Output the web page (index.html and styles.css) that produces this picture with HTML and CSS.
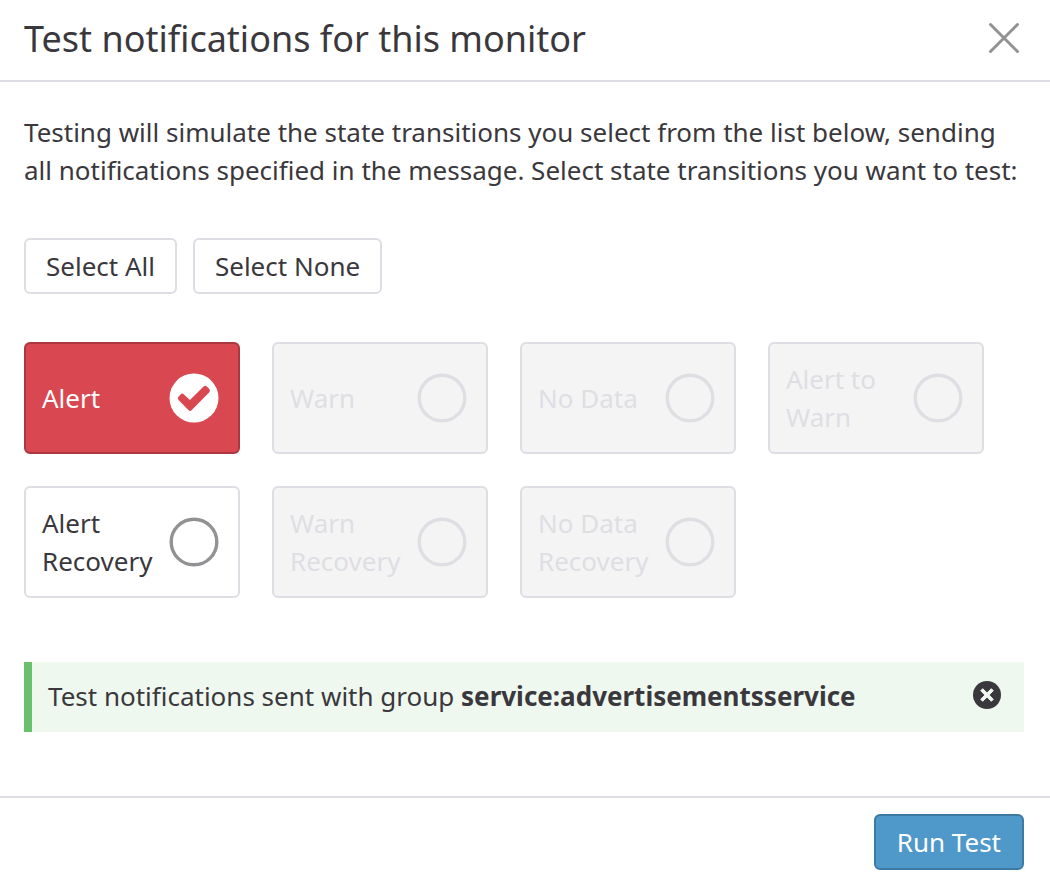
FILE: index.html
```
<!DOCTYPE html>
<html lang="en">
<head>
<meta charset="utf-8">
<meta name="viewport" content="width=device-width, initial-scale=1">
<title>Test notifications for this monitor</title>
<link rel="stylesheet" href="styles.css">
</head>
<body>
<main class="modal">
  <header class="modal-header">
    <h1 class="modal-title">Test notifications for this monitor</h1>
    <button class="icon-button" type="button" aria-label="Close">
      <svg class="close-icon" viewBox="0 0 32 32" aria-hidden="true"><path d="M2.5 2.5 29.5 29.5M29.5 2.5 2.5 29.5"/></svg>
    </button>
  </header>

  <div class="modal-body">
    <p class="intro">Testing will simulate the state transitions you select from the list below, sending all notifications specified in the message. Select state transitions you want to test:</p>

    <div class="actions">
      <button class="button" type="button">Select All</button>
      <button class="button" type="button">Select None</button>
    </div>

    <div class="transitions">
      <label class="card card-selected">
        <span class="card-label">Alert</span>
        <span class="mark">
          <input class="mark-input" type="checkbox" checked>
          <svg class="mark-icon" viewBox="0 0 50 50" aria-hidden="true"><circle class="disc" cx="25" cy="25" r="24.5"/><path class="tick" d="M9.600 23.500 11.700 21.400Q13.300 19.800 14.900 21.400L20.900 26.900 34.600 13.600Q36.200 12 37.800 13.600L40.300 16.100Q41.700 17.700 40.300 19.200L22.600 37.200Q21.100 38.600 19.600 37.200L9.600 26.900Q8 25.200 9.600 23.500Z"/></svg>
        </span>
      </label>
      <label class="card card-disabled">
        <span class="card-label">Warn</span>
        <span class="mark">
          <input class="mark-input" type="checkbox" disabled>
          <svg class="mark-icon" viewBox="0 0 50 50" aria-hidden="true"><circle class="ring" cx="25" cy="25" r="22.800"/></svg>
        </span>
      </label>
      <label class="card card-disabled">
        <span class="card-label">No Data</span>
        <span class="mark">
          <input class="mark-input" type="checkbox" disabled>
          <svg class="mark-icon" viewBox="0 0 50 50" aria-hidden="true"><circle class="ring" cx="25" cy="25" r="22.800"/></svg>
        </span>
      </label>
      <label class="card card-disabled">
        <span class="card-label">Alert to Warn</span>
        <span class="mark">
          <input class="mark-input" type="checkbox" disabled>
          <svg class="mark-icon" viewBox="0 0 50 50" aria-hidden="true"><circle class="ring" cx="25" cy="25" r="22.800"/></svg>
        </span>
      </label>
      <label class="card">
        <span class="card-label">Alert Recovery</span>
        <span class="mark">
          <input class="mark-input" type="checkbox">
          <svg class="mark-icon" viewBox="0 0 50 50" aria-hidden="true"><circle class="ring" cx="25" cy="25" r="22.800"/></svg>
        </span>
      </label>
      <label class="card card-disabled">
        <span class="card-label">Warn Recovery</span>
        <span class="mark">
          <input class="mark-input" type="checkbox" disabled>
          <svg class="mark-icon" viewBox="0 0 50 50" aria-hidden="true"><circle class="ring" cx="25" cy="25" r="22.800"/></svg>
        </span>
      </label>
      <label class="card card-disabled">
        <span class="card-label">No Data Recovery</span>
        <span class="mark">
          <input class="mark-input" type="checkbox" disabled>
          <svg class="mark-icon" viewBox="0 0 50 50" aria-hidden="true"><circle class="ring" cx="25" cy="25" r="22.800"/></svg>
        </span>
      </label>
    </div>

    <div class="notice" role="status">
      <p class="notice-text">Test notifications sent with group <strong>service:advertisementsservice</strong></p>
      <button class="icon-button" type="button" aria-label="Dismiss">
        <svg class="dismiss-icon" viewBox="0 0 28 28" aria-hidden="true"><circle cx="14" cy="14" r="14"/><path d="M7.700 9.700 9.700 7.700 14 11.900 18.300 7.700 20.300 9.700 16.100 14 20.300 18.300 18.300 20.300 14 16.100 9.700 20.300 7.700 18.300 11.900 14Z"/></svg>
      </button>
    </div>
  </div>

  <footer class="modal-footer">
    <button class="button button-primary" type="button">Run Test</button>
  </footer>
</main>
</body>
</html>
```
FILE: styles.css
```
* {
  box-sizing: border-box;
}

body {
  margin: 0;
  background: #fff;
  color: #3a383d;
  font-family: "Noto Sans", sans-serif;
  font-size: 26px;
  line-height: 38px;
}

.modal-header {
  display: flex;
  align-items: flex-start;
  justify-content: space-between;
  padding: 13px 30px 15px 24px;
  border-bottom: 2px solid #dedde3;
}

.modal-title {
  margin: 0;
  font-size: 36px;
  font-weight: 400;
  line-height: 52px;
}

.icon-button {
  display: flex;
  padding: 0;
  border: 0;
  background: none;
  cursor: pointer;
}

.modal-header .icon-button {
  padding-top: 9px;
}

.close-icon {
  width: 32px;
  height: 32px;
  fill: none;
  stroke: #929194;
  stroke-width: 3;
  stroke-linecap: round;
}

.modal-body {
  padding: 31px 26px 64px 24px;
}

.intro {
  margin: 0 0 49px;
}

.actions {
  display: flex;
  gap: 16px;
  margin-bottom: 48px;
}

.button {
  padding: 7px 20px;
  border: 2px solid #dedde3;
  border-radius: 6px;
  background: #fff;
  color: inherit;
  font: inherit;
  cursor: pointer;
}

.button-primary {
  padding: 7px 21px;
  border-color: #3c7aa3;
  background: #4f98ca;
  color: #fff;
}

.transitions {
  display: grid;
  grid-template-columns: repeat(auto-fill, 216px);
  gap: 32px;
  margin-bottom: 64px;
}

.card {
  display: flex;
  align-items: center;
  justify-content: space-between;
  min-height: 112px;
  padding: 16px 19px 16px 16px;
  border: 2px solid #dedde3;
  border-radius: 6px;
  cursor: pointer;
}

.card-selected {
  border-color: #ab373f;
  background: #d94750;
  color: #fff;
}

.card-disabled {
  background: #f4f4f5;
  color: #dfdee3;
  cursor: default;
}

.mark {
  display: grid;
  flex: none;
}

.mark-input,
.mark-icon {
  grid-area: 1 / 1;
  width: 50px;
  height: 50px;
  margin: 0;
}

.mark-input {
  appearance: none;
  border-radius: 50%;
}

.mark-icon {
  pointer-events: none;
}

.ring {
  fill: none;
  stroke: #929194;
  stroke-width: 3.4;
}

.card-disabled .ring {
  stroke: #dfdee3;
}

.disc {
  fill: #fff;
}

.tick {
  fill: #d94750;
}

.notice {
  display: flex;
  align-items: flex-start;
  justify-content: space-between;
  padding: 15px 23px 17px 16px;
  border-left: 8px solid #69c06d;
  background: #eef8ef;
}

.notice .icon-button {
  padding-top: 4px;
}

.notice-text {
  margin: 0;
}

.dismiss-icon {
  width: 28px;
  height: 28px;
  fill: #3a383d;
}

.dismiss-icon path {
  fill: #eef8ef;
  stroke: #eef8ef;
  stroke-width: 1;
  stroke-linejoin: round;
}

.modal-footer {
  display: flex;
  justify-content: flex-end;
  padding: 16px 26px 12px;
  border-top: 2px solid #dedde3;
}
```
